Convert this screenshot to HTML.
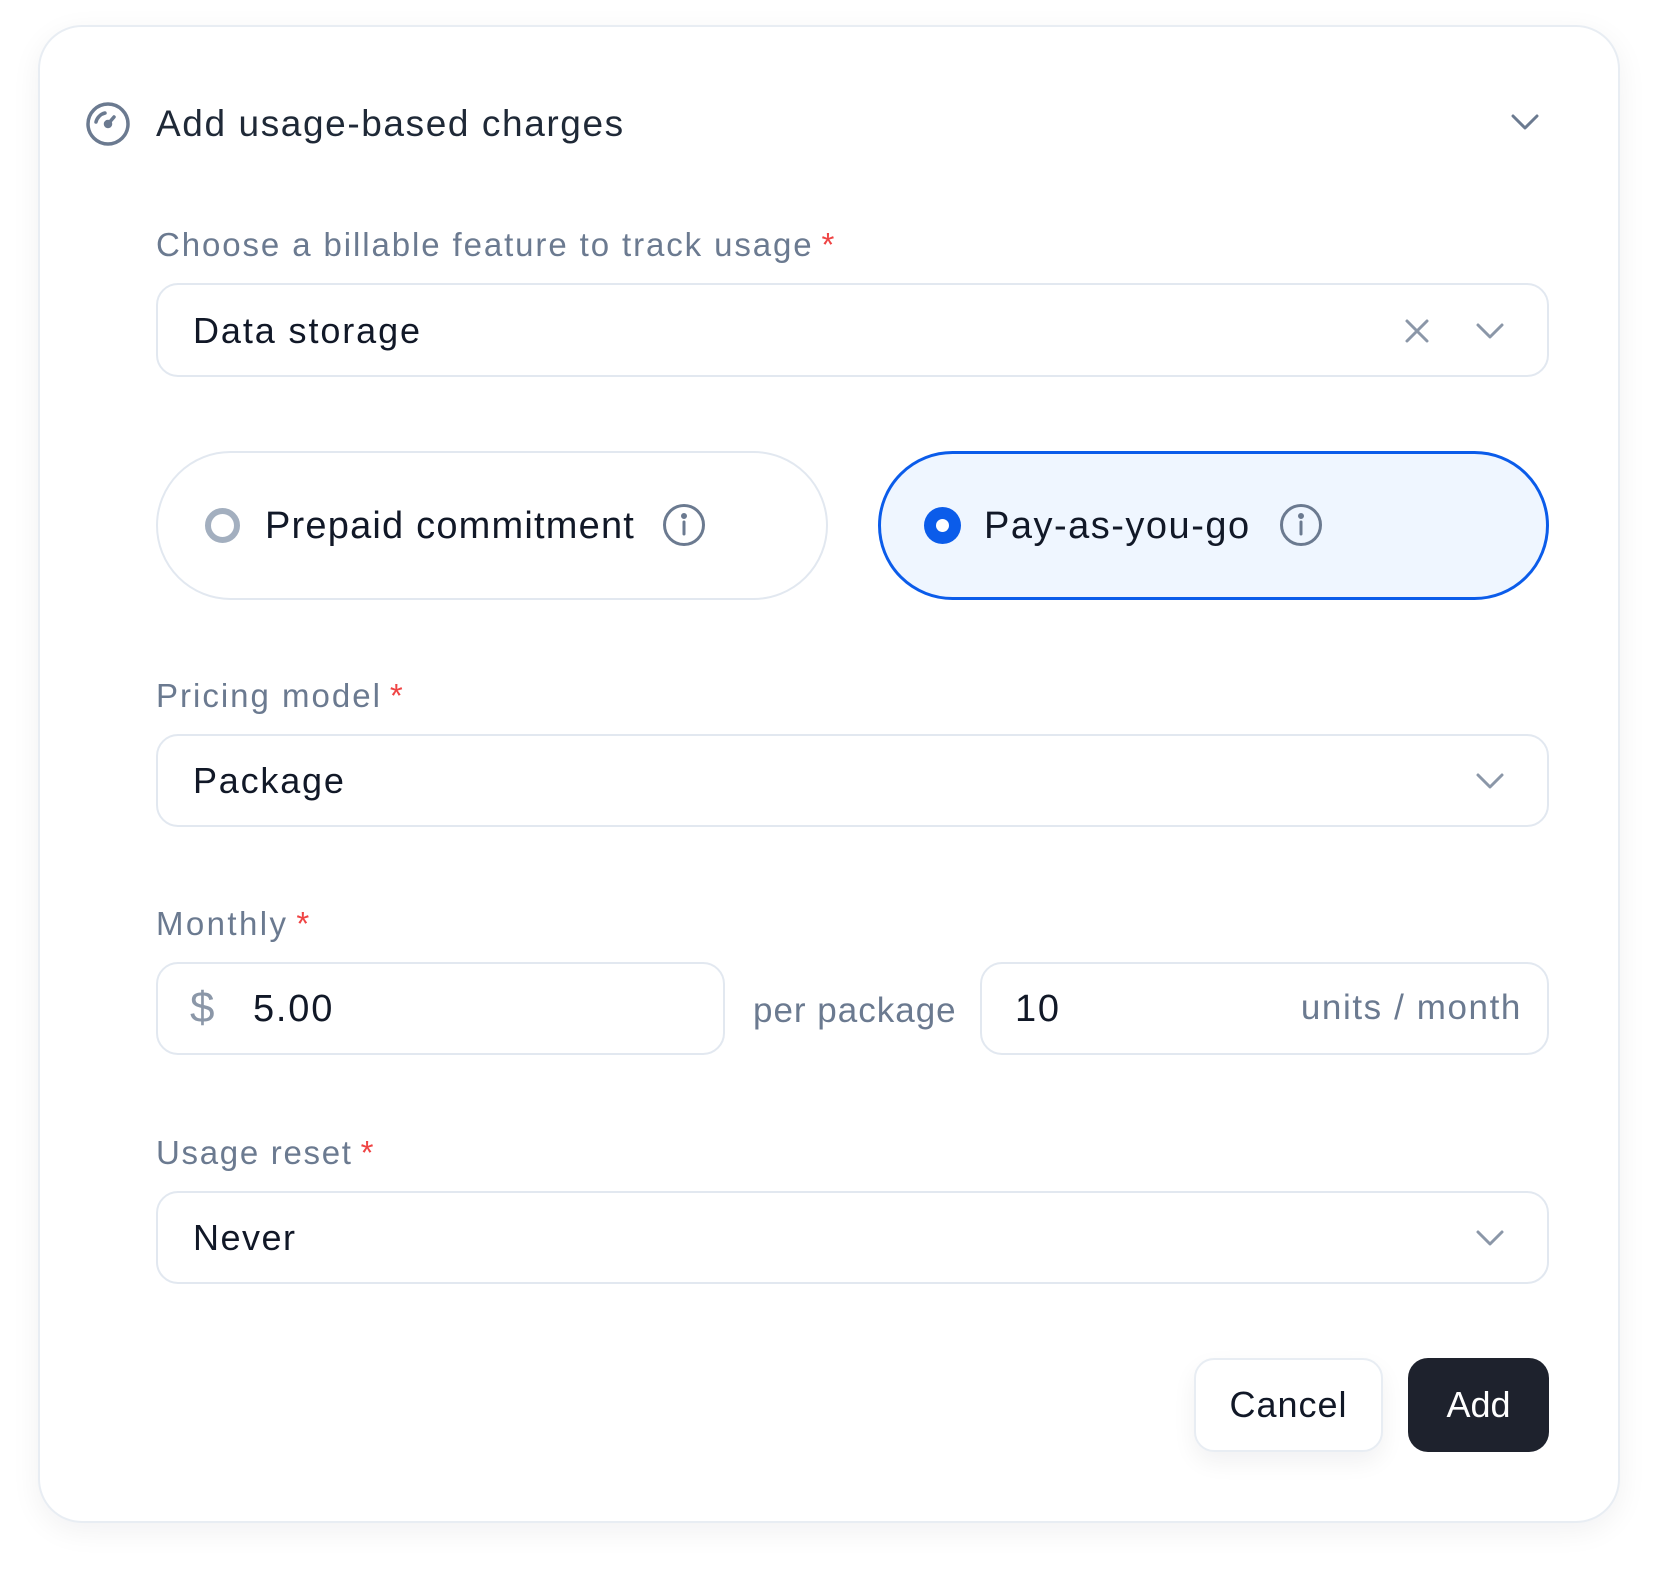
<!DOCTYPE html>
<html><head><meta charset="utf-8"><style>
*{box-sizing:border-box;margin:0;padding:0}
body{width:1656px;height:1572px;background:#fff;font-family:"Liberation Sans",sans-serif;position:relative;overflow:hidden}
.card{position:absolute;left:38px;top:25px;width:1582px;height:1498px;border:2px solid #e8edf3;border-radius:44px;box-shadow:0 8px 30px rgba(15,23,42,0.06);background:#fff}
.a{position:absolute}
.lbl{position:absolute;left:156px;font-size:33px;color:#6b7a90;line-height:40px;letter-spacing:1.9px}
.lbl b{color:#ef4444;font-weight:normal;margin-left:8px}
.inp{position:absolute;border:2px solid #e2e8f0;border-radius:22px;background:#fff}
.val{position:absolute;font-size:36px;color:#111827;line-height:40px;letter-spacing:1.8px}
.pill{position:absolute;top:451px;height:149px;border-radius:75px}
</style></head><body>
<div class="card"></div>
<svg class="a" style="left:85px;top:101px" width="46" height="46" viewBox="0 0 46 46" fill="none" stroke="#6b7a90" stroke-width="3.5" stroke-linecap="round"><circle cx="23" cy="23" r="20"/><path d="M11 21a12 12 0 0 1 9-9"/><path d="M23 23l6-7"/><circle cx="23" cy="23" r="2.5" fill="#6b7a90"/></svg>
<div class="val" style="left:156px;top:104px;color:#1f2937;font-size:37px;letter-spacing:1.6px">Add usage-based charges</div>
<svg class="a" style="left:1510px;top:112px" width="30" height="20" viewBox="0 0 30 20" fill="none" stroke="#6b7a90" stroke-width="3" stroke-linecap="round" stroke-linejoin="round"><path d="M3 4l12 12 12-12"/></svg>

<div class="lbl" style="top:225px">Choose a billable feature to track usage<b>*</b></div>
<div class="inp" style="left:156px;top:283px;width:1393px;height:94px"></div>
<div class="val" style="left:193px;top:311px;letter-spacing:1.9px">Data storage</div>
<svg class="a" style="left:1404px;top:318px" width="26" height="26" viewBox="0 0 26 26" stroke="#8b97a8" stroke-width="3" stroke-linecap="round"><path d="M3 3l20 20M23 3L3 23"/></svg>
<svg class="a" style="left:1475px;top:321px" width="30" height="20" viewBox="0 0 30 20" fill="none" stroke="#8b97a8" stroke-width="3" stroke-linecap="round" stroke-linejoin="round"><path d="M3 4l12 12 12-12"/></svg>

<div class="pill" style="left:156px;width:672px;border:2.5px solid #e2e8f0;background:#fff"></div>
<div class="a" style="left:205px;top:508px;width:35px;height:35px;border:6px solid #a3afbf;border-radius:50%"></div>
<div class="val" style="left:265px;top:506px;font-size:38px;letter-spacing:1.2px">Prepaid commitment</div>
<svg class="a" style="left:662px;top:503px" width="44" height="44" viewBox="0 0 44 44" fill="none" stroke="#6b7a90" stroke-width="3"><circle cx="22" cy="22" r="19.5"/><path d="M22 19v12" stroke-linecap="round"/><circle cx="22" cy="13" r="1.5" fill="#6b7a90"/></svg>

<div class="pill" style="left:878px;width:671px;border:3px solid #0b5cea;background:#eff6ff"></div>
<div class="a" style="left:924px;top:507px;width:37px;height:37px;background:#0b5cea;border-radius:50%"></div>
<div class="a" style="left:936px;top:519px;width:13px;height:13px;background:#fff;border-radius:50%"></div>
<div class="val" style="left:984px;top:506px;font-size:38px;letter-spacing:1.5px">Pay-as-you-go</div>
<svg class="a" style="left:1279px;top:503px" width="44" height="44" viewBox="0 0 44 44" fill="none" stroke="#6b7a90" stroke-width="3"><circle cx="22" cy="22" r="19.5"/><path d="M22 19v12" stroke-linecap="round"/><circle cx="22" cy="13" r="1.5" fill="#6b7a90"/></svg>

<div class="lbl" style="top:676px;letter-spacing:2px">Pricing model<b>*</b></div>
<div class="inp" style="left:156px;top:734px;width:1393px;height:93px"></div>
<div class="val" style="left:193px;top:761px">Package</div>
<svg class="a" style="left:1475px;top:771px" width="30" height="20" viewBox="0 0 30 20" fill="none" stroke="#8b97a8" stroke-width="3" stroke-linecap="round" stroke-linejoin="round"><path d="M3 4l12 12 12-12"/></svg>

<div class="lbl" style="top:904px;letter-spacing:2.4px">Monthly<b>*</b></div>
<div class="inp" style="left:156px;top:962px;width:569px;height:93px"></div>
<div class="val" style="left:190px;top:988px;color:#8b97a8;font-size:44px">$</div>
<div class="val" style="left:253px;top:989px;font-size:38px">5.00</div>
<div class="val" style="left:753px;top:991px;color:#6b7a90;font-size:35px;letter-spacing:1px">per package</div>
<div class="inp" style="left:980px;top:962px;width:569px;height:93px"></div>
<div class="val" style="left:1015px;top:989px;font-size:38px">10</div>
<div class="val" style="right:134px;top:988px;color:#6b7a90;font-size:35px;letter-spacing:1.6px">units / month</div>

<div class="lbl" style="top:1133px;letter-spacing:1.7px">Usage reset<b>*</b></div>
<div class="inp" style="left:156px;top:1191px;width:1393px;height:93px"></div>
<div class="val" style="left:193px;top:1218px;letter-spacing:1.5px">Never</div>
<svg class="a" style="left:1475px;top:1228px" width="30" height="20" viewBox="0 0 30 20" fill="none" stroke="#8b97a8" stroke-width="3" stroke-linecap="round" stroke-linejoin="round"><path d="M3 4l12 12 12-12"/></svg>

<div class="a" style="left:1194px;top:1358px;width:189px;height:94px;border:2px solid #e8edf3;border-radius:20px;background:#fff;box-shadow:0 10px 24px rgba(15,23,42,0.06);font-size:36px;color:#111827;text-align:center;line-height:90px;letter-spacing:1px">Cancel</div>
<div class="a" style="left:1408px;top:1358px;width:141px;height:94px;border-radius:20px;background:#1e222d;font-size:36px;color:#fff;text-align:center;line-height:94px">Add</div>
</body></html>
